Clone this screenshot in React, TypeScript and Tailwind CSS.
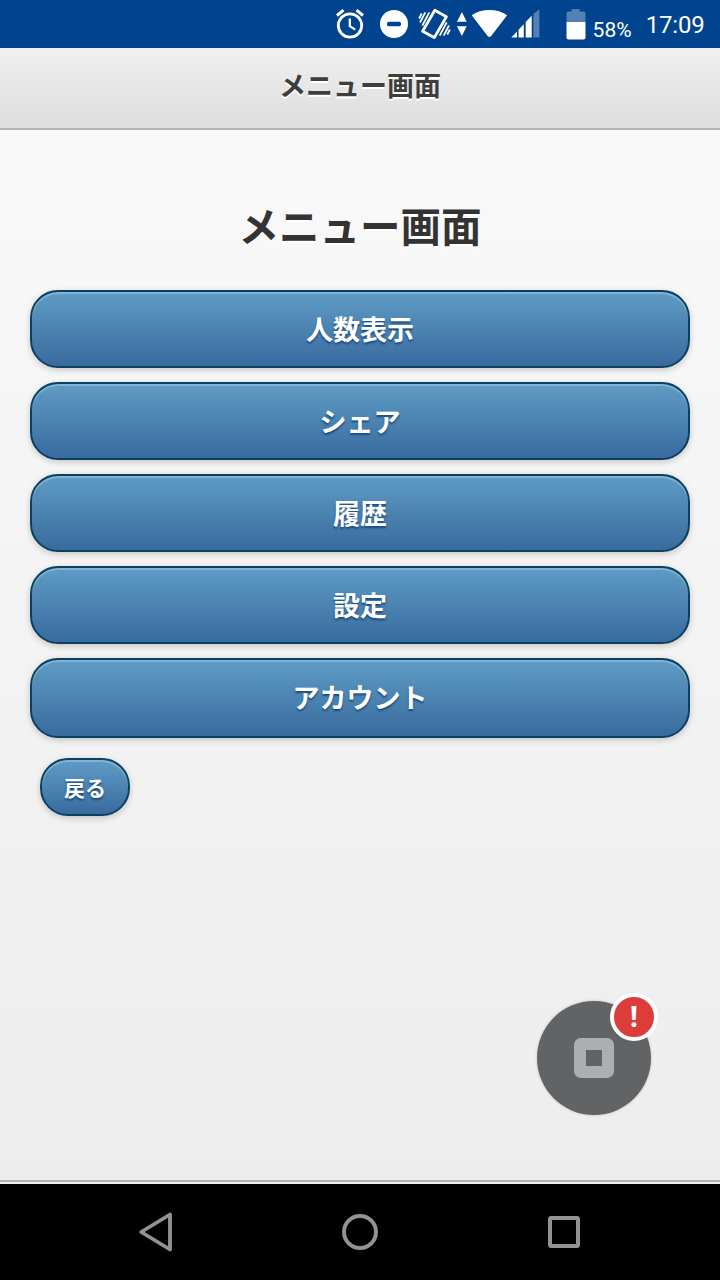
import React from 'react';
import clsx from 'clsx';

const MENU_ITEMS = ['人数表示', 'シェア', '履歴', '設定', 'アカウント'];

const BUTTON_STYLE =
  'block border-2 border-[#0c4060] bg-linear-to-b from-[#5f9cc5] to-[#396b9e] font-bold text-white [text-shadow:0_2px_2px_#194b7e] shadow-[inset_0_2px_0_#80b3d5,0_2px_6px_rgba(0,0,0,0.2)]';

const StatusBar: React.FC = () => (
  <header className="flex h-12 shrink-0 items-start bg-[#00448f] pl-[334px] font-[Roboto,sans-serif] text-white">
    {/* アラーム */}
    <svg className="h-12 w-8 shrink-0" viewBox="334 0 32 48" fill="none" stroke="currentColor">
      <circle cx="350" cy="25.5" r="11.7" strokeWidth="2.8" />
      <path d="M349.8 18.500v7.700l5.400 3.400" strokeWidth="2.300" />
      <path d="M337 15.500l6.500-5.300M363 15.500l-6.500-5.300" strokeWidth="3" />
    </svg>
    {/* サイレント */}
    <svg className="ml-3 h-12 w-8 shrink-0" viewBox="378 0 32 48">
      <circle cx="394" cy="24" r="14" fill="currentColor" />
      <rect x="387" y="21.8" width="14" height="4.4" rx="1.6" fill="#00448f" />
    </svg>
    {/* バイブ */}
    <svg className="ml-1.5 h-12 w-9 shrink-0" viewBox="416 0 36 48" fill="none" stroke="currentColor">
      <path d="M434.800 10.300l11.600 6.400-12.100 20.900-11.700-6.400z" strokeWidth="2.8" strokeLinejoin="round" />
      <path
        d="M429.300 12.300l-7 13.400M425.300 12.300l-5.300 10.200M421.700 13.500l-2.600 5M439.700 35.700l7-13.400M443.700 35.700l5.300-10.200M447.300 34.500l2.600-5"
        strokeWidth="1.800"
      />
    </svg>
    {/* 電波状態 */}
    <svg className="ml-1 h-12 w-[86px] shrink-0" viewBox="456 0 86 48" fill="currentColor">
      <path d="M461.9 12l4.8 9.8H457zM461.9 36l4.8-9.8H457z" />
      <path d="M471.7 15.2C476.4 11.7 482.8 10 489.4 10s13 1.7 17.7 5.2L491 36.2q-1.6 1.6-3.2 0z" />
      <path d="M511.3 37.5l5.700-6v6zM518.500 29.700l5.300-5.500v13.300h-5.300zM525.700 22l6-6.300v21.800h-6z" />
      <path d="M533.4 14l6-4.7v28.2h-6z" fillOpacity=".33" />
    </svg>
    {/* バッテリー */}
    <svg className="ml-[22px] h-12 w-6 shrink-0" viewBox="564 0 24 48" fill="currentColor">
      <path d="M571.500 11.500V9h8v2.500h4.300q1.600 0 1.600 1.600V22H566.500v-8.900q0-1.600 1.600-1.600z" fillOpacity=".33" />
      <path d="M566.500 22h19v15.500q0 2-2 2h-15q-2 0-2-2z" />
    </svg>
    <span className="ml-[4.500px] pt-[20px] text-[21px] leading-[21px] tracking-[0.1px]">58%</span>
    <span className="ml-[14px] pt-[13px] text-[24px] leading-6 tracking-[-0.2px]">17:09</span>
  </header>
);

const MenuPage: React.FC = () => (
  <main className="flex min-h-0 flex-1 flex-col bg-linear-to-b from-[#f9f9f9] to-[#ededed] px-[30px] pt-[65px] text-[#333] [text-shadow:0_2px_0_#fff]">
    <h1 className="text-center text-[40.500px] leading-[60px] font-bold">メニュー画面</h1>
    <nav className="mt-[35px] flex flex-col gap-3.5">
      {MENU_ITEMS.map((label, i) => (
        <button
          key={label}
          className={clsx(
            BUTTON_STYLE,
            'rounded-[28px] text-[27px] leading-10',
            i === MENU_ITEMS.length - 1 ? 'h-20 pb-0.5' : 'h-[78px]',
          )}
        >
          {label}
        </button>
      ))}
    </nav>
    <button className={clsx(BUTTON_STYLE, 'mt-5 ml-2.5 h-[58px] w-[90px] rounded-[28px] text-[21px] leading-8')}>
      戻る
    </button>
  </main>
);

// 画面上に浮かぶ停止ボタン
const FloatingButton: React.FC = () => (
  <button className="absolute top-[1001px] left-[537px] flex size-[114px] items-center justify-center rounded-full bg-[#626365] shadow-[0_0_3px_rgba(0,0,0,0.2)]">
    <span className="flex size-10 items-center justify-center rounded-[7px] bg-[#adaeb0]">
      <span className="size-4 bg-[#626365]" />
    </span>
    <span className="absolute -top-2 left-[73px] flex size-12 items-center justify-center rounded-full border-4 border-white bg-[#dc3d3a] pb-0.5 font-['Noto_Sans',sans-serif] text-[28px] leading-none font-bold text-white">
      !
    </span>
  </button>
);

const NavigationBar: React.FC = () => (
  <footer className="grid h-24 shrink-0 grid-cols-3 items-center justify-items-center bg-black px-[54px] text-[#929292]">
    <svg className="size-12" viewBox="0 0 48 48" fill="none" stroke="currentColor" strokeWidth="3.8" strokeLinejoin="round">
      <path d="M38 6.500v35L9.200 24z" />
    </svg>
    <svg className="size-12" viewBox="0 0 48 48" fill="none" stroke="currentColor" strokeWidth="4">
      <circle cx="24" cy="24" r="16" />
    </svg>
    <svg className="size-12" viewBox="0 0 48 48" fill="none" stroke="currentColor" strokeWidth="4">
      <rect x="10" y="10" width="28" height="28" rx="1" />
    </svg>
  </footer>
);

const App: React.FC = () => (
  <div className="relative flex h-[1280px] w-[720px] flex-col overflow-hidden bg-[#ededed] font-['Noto_Sans_CJK_JP',sans-serif]">
    <StatusBar />
    <div className="flex h-[82px] shrink-0 items-center justify-center border-b-2 border-[#b3b3b3] bg-linear-to-b from-[#f0f0f0] to-[#dddddd] pb-1.5 text-[27px] leading-10 font-bold text-[#3e3e3e] [text-shadow:0_2px_0_#fff]">
      メニュー画面
    </div>
    <MenuPage />
    <div className="h-1 shrink-0 border-t-2 border-[#b3b3b3] bg-[#eeeeee]" />
    <NavigationBar />
    <FloatingButton />
  </div>
);

export default App;
